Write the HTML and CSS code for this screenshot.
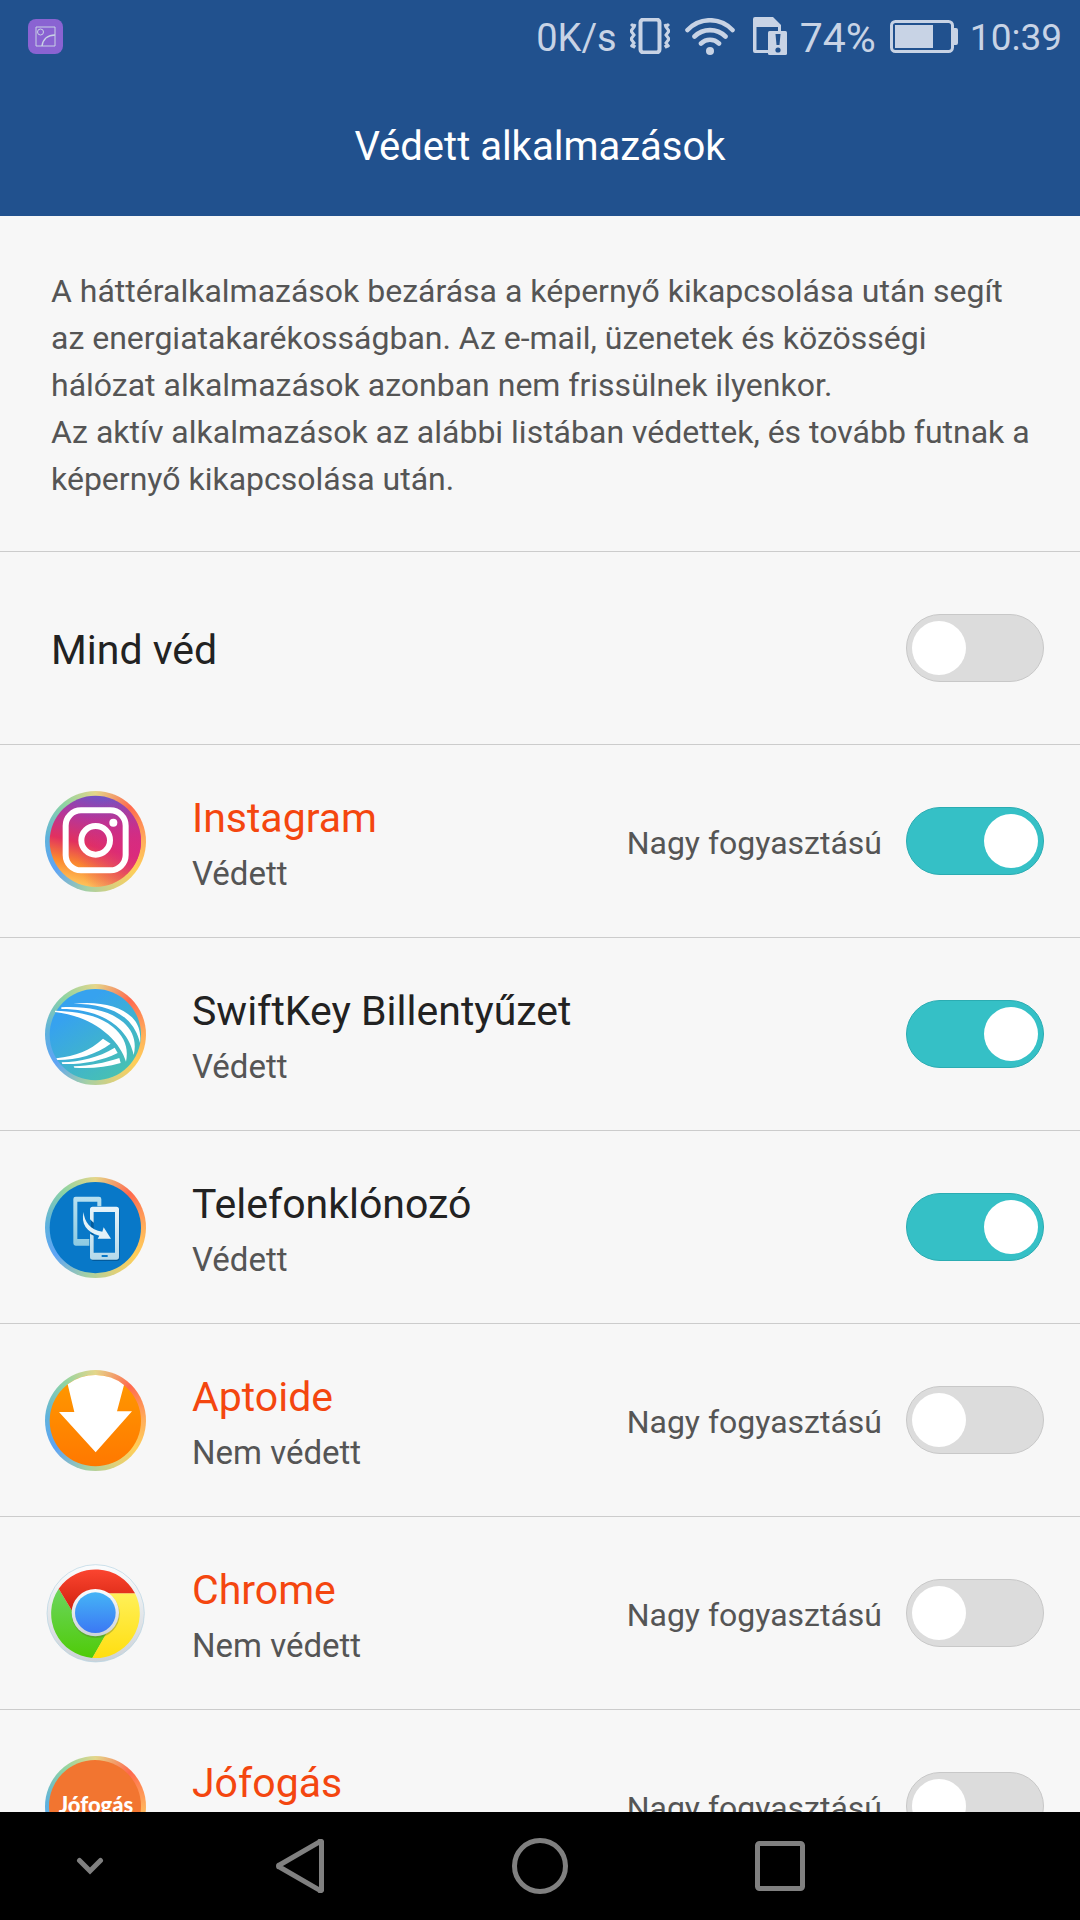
FILE: index.html
```html
<!DOCTYPE html>
<html lang="hu">
<head>
<meta charset="utf-8">
<meta name="viewport" content="width=device-width, initial-scale=1">
<title>Védett alkalmazások</title>
<link rel="stylesheet" href="styles.css">
</head>
<body>
<header class="header">
  <div class="status">
    <svg class="status-notice" width="35" height="35" viewBox="0 0 35 35" fill="none" stroke="#c8d3e5">
      <rect width="35" height="35" rx="8" fill="#8a63d2" stroke="none"/>
      <path d="M8 8h19v19H8z"/><circle cx="12.500" cy="13" r="3"/><path d="M14 27C15 20 20 16 27 16" stroke-width="1.500"/>
    </svg>
    <span class="status-speed">0K/s</span>
    <svg class="status-vibrate" width="40" height="36" viewBox="0 0 40 36" fill="none" stroke="#c8d3e5" stroke-width="3">
      <rect x="10.500" y="1.500" width="19" height="33" rx="3" stroke-width="4"/>
      <path d="M1 6l3 3-3 4 3 4-3 4 3 4-3 4M5 6l-1 3M5 27l-2 3"/>
      <path d="M39 6l-3 3 3 4-3 4 3 4-3 4 3 4M35 6l1 3M35 27l2 3"/>
    </svg>
    <svg class="status-wifi" width="50" height="37" viewBox="0 0 50 37" fill="none" stroke="#c8d3e5" stroke-width="4.600" stroke-linecap="round">
      <path d="M2.500 12C15-1 35-1 47.500 12M9.500 18.500C18 10 32 10 40.500 18.500M16 25.500C21 20.500 29 20.500 34 25.500"/>
      <circle cx="25" cy="33" r="4" fill="#c8d3e5" stroke="none"/>
    </svg>
    <svg class="status-sim" width="35" height="38" viewBox="0 0 35 38">
      <path d="M2 0h18l8 8v7h-3v-5H3.500v23H16v3H2a2 2 0 0 1-2-2V2a2 2 0 0 1 2-2z" fill="#c8d3e5"/>
      <rect x="15" y="14" width="19" height="24" rx="1.500" fill="#c8d3e5"/>
      <path d="M22.500 17h5l-1 11h-3z" fill="#21518e"/><circle cx="25" cy="33" r="2.600" fill="#21518e"/>
    </svg>
    <span class="status-charge">74%</span>
    <svg class="status-battery" width="68" height="33" viewBox="0 0 68 33" fill="none" stroke="#c8d3e5">
      <rect x="1.500" y="1.500" width="61" height="30" rx="4" stroke-width="3"/>
      <path d="M5 5h38v23H5zM64 8h2q2 0 2 2v13q0 2-2 2h-2z" fill="#c8d3e5" stroke="none"/>
    </svg>
    <time class="status-time">10:39</time>
  </div>
  <h1 class="title">Védett alkalmazások</h1>
</header>

<main class="content">
  <p class="intro">A háttéralkalmazások bezárása a képernyő kikapcsolása után segít<br>az energiatakarékosságban. Az e-mail, üzenetek és közösségi<br>hálózat alkalmazások azonban nem frissülnek ilyenkor.<br>Az aktív alkalmazások az alábbi listában védettek, és tovább futnak a<br>képernyő kikapcsolása után.</p>

  <div class="row">
    <div class="grow grow-single"><label class="name" for="all">Mind véd</label></div>
    <input class="switch" type="checkbox" id="all">
  </div>

  <div class="row">
    <span class="icon">
      <svg class="art" viewBox="46 31 303 303">
        <defs>
          <linearGradient id="ig" x1="0.350" y1="1" x2="0.600" y2="0"><stop offset="0" stop-color="#ffc85e"/><stop offset=".22" stop-color="#fb8a2e"/><stop offset=".45" stop-color="#e2305f"/><stop offset=".72" stop-color="#b5369a"/><stop offset="1" stop-color="#6a55c8"/></linearGradient>
          <radialGradient id="igp" cx="1" cy=".6" r=".7"><stop offset="0" stop-color="#d92a80"/><stop offset="1" stop-color="#d92a80" stop-opacity="0"/></radialGradient>
        </defs>
        <circle cx="197" cy="182" r="137" fill="url(#ig)"/><circle cx="197" cy="182" r="137" fill="url(#igp)"/>
        <g fill="none" stroke="#fff" stroke-width="18"><rect x="108" y="89" width="180" height="180" rx="46"/><circle cx="198" cy="179" r="43"/></g>
        <circle cx="251" cy="126" r="12" fill="#fff"/>
      </svg>
    </span>
    <div class="grow">
      <label class="name heavy" for="instagram">Instagram</label>
      <div class="state">Védett</div>
    </div>
    <span class="usage">Nagy fogyasztású</span>
    <input class="switch" type="checkbox" id="instagram" checked>
  </div>

  <div class="row">
    <span class="icon">
      <svg class="art" viewBox="46 39 303 303">
        <defs><linearGradient id="sk" x1=".2" y1=".1" x2=".8" y2=".95"><stop offset=".15" stop-color="#36a2ef"/><stop offset="1" stop-color="#48c2b0"/></linearGradient></defs>
        <circle cx="197" cy="191" r="137" fill="url(#sk)"/>
        <g fill="#fff">
          <path d="M131 98C205 90 270 103 307 139C330 162 334 190 331 216C325 190 312 163 289 143C250 109 193 99 131 98z"/>
          <path d="M95 109C175 105 240 119 281 154C312 181 321 217 312 252C307 230 297 203 274 178C227 128 158 114 95 114z"/>
          <path d="M76 119C145 121 205 132 249 167C286 197 297 232 289 272C281 247 264 218 237 193C190 150 134 130 76 123z"/>
          <path d="M80 262C139 254 179 240 220 203L243 218C200 250 145 267 83 267z"/>
          <path d="M96 274C155 272 205 260 255 230L264 246C214 271 155 281 98 279z"/>
          <path d="M132 286C180 284 224 276 269 261L273 276C228 290 180 293 134 290z"/>
        </g>
      </svg>
    </span>
    <div class="grow">
      <label class="name" for="swiftkey">SwiftKey Billentyűzet</label>
      <div class="state">Védett</div>
    </div>
    <input class="switch" type="checkbox" id="swiftkey" checked>
  </div>

  <div class="row">
    <span class="icon">
      <svg class="art" viewBox="46 49 303 303">
        <defs><linearGradient id="ph" x1="0" y1="0" x2="0" y2="1"><stop offset="0" stop-color="#b8e0f0"/><stop offset="1" stop-color="#8ecbe2"/></linearGradient><linearGradient id="pf" x1="0" y1="0" x2="0" y2="1"><stop offset="0" stop-color="#e8f4fa"/><stop offset="1" stop-color="#b4d9ea"/></linearGradient></defs>
        <circle cx="197" cy="201" r="137" fill="#0878c8"/>
        <g fill="#035b9c" transform="translate(3 4)"><path fill-rule="evenodd" d="M190 138h68q9 0 9 9v142q0 8-9 8h-68q-9 0-9-8V147q0-9 9-9zm2 16v122h64V154z"/></g>
        <path fill="#0878c8" d="M192 154h64v122h-64z"/>
        <path fill="url(#ph)" d="M138 108h70q7 0 7 7v22h-12v-14h-60v112h36v20h-41q-7 0-7-7V115q0-7 7-7z"/>
        <path fill="url(#pf)" fill-rule="evenodd" d="M189 138h71q8 0 8 8v143q0 8-8 8h-71q-8 0-8-8v-70l11 6v51h64V154h-64v32l-11-10v-30q0-8 8-8z"/>
        <rect x="216" y="283" width="18" height="6" fill="#0878c8"/>
        <path d="M162 154C164 184 181 207 218 213L222 200L244 234L204 234L209 225C171 216 153 188 162 154z" fill="#e4f2f8"/>
      </svg>
    </span>
    <div class="grow">
      <label class="name" for="clone">Telefonklónozó</label>
      <div class="state">Védett</div>
    </div>
    <input class="switch" type="checkbox" id="clone" checked>
  </div>

  <div class="row">
    <span class="icon">
      <svg class="art" viewBox="46 43 303 303">
        <defs><linearGradient id="ap" x1="0" y1="0" x2="0" y2="1"><stop offset="0" stop-color="#ff9a00"/><stop offset="1" stop-color="#ff7800"/></linearGradient></defs>
        <circle cx="197" cy="195" r="137" fill="url(#ap)"/>
        <path d="M114 86A137 137 0 0 1 283 88L262 167H307L198 290L88 169H134z" fill="#fff"/>
      </svg>
    </span>
    <div class="grow">
      <label class="name heavy" for="aptoide">Aptoide</label>
      <div class="state">Nem védett</div>
    </div>
    <span class="usage">Nagy fogyasztású</span>
    <input class="switch" type="checkbox" id="aptoide">
  </div>

  <div class="row">
    <span class="icon icon-plain">
      <svg class="art" viewBox="46 37 303 303">
        <defs>
          <linearGradient id="cb" x1="0" y1="0" x2="0" y2="1"><stop offset="0" stop-color="#fbfcfd"/><stop offset="1" stop-color="#ccd2d8"/></linearGradient>
          <linearGradient id="cr" x1="0" y1="0" x2="0" y2="1"><stop offset="0" stop-color="#fb4530"/><stop offset="1" stop-color="#cf1f0c"/></linearGradient>
          <linearGradient id="cg" x1="0" y1="0" x2="0" y2="1"><stop offset="0" stop-color="#6cd55e"/><stop offset="1" stop-color="#4fcb08"/></linearGradient>
          <linearGradient id="cy" x1="0" y1="0" x2="0" y2="1"><stop offset="0" stop-color="#fff058"/><stop offset="1" stop-color="#ffde10"/></linearGradient>
          <linearGradient id="cc" x1="0" y1="0" x2="0" y2="1"><stop offset="0" stop-color="#45b4f6"/><stop offset="1" stop-color="#3b78f4"/></linearGradient>
        </defs>
        <circle cx="198" cy="188" r="146" fill="url(#cb)" stroke="#b5d3e2" stroke-width="2"/>
        <path d="M87 114A134 134 0 0 0 188 322L230 250L198 188L127 180z" fill="url(#cg)"/>
        <path d="M316 128A134 134 0 0 1 188 322L230 248L198 188L240 128z" fill="url(#cy)"/>
        <path d="M87 114A134 134 0 0 1 316 128H198V188L127 180z" fill="url(#cr)"/>
        <circle cx="198" cy="190" r="72" fill="#5a6a38" opacity=".35"/>
        <circle cx="197" cy="186" r="71" fill="url(#cb)"/><circle cx="197" cy="186" r="61" fill="url(#cc)"/>
      </svg>
    </span>
    <div class="grow">
      <label class="name heavy" for="chrome">Chrome</label>
      <div class="state">Nem védett</div>
    </div>
    <span class="usage">Nagy fogyasztású</span>
    <input class="switch" type="checkbox" id="chrome">
  </div>

  <div class="row">
    <span class="icon">
      <svg class="art" viewBox="0 0 101 101">
        <circle cx="50" cy="50" r="46" fill="#f27530"/>
        <text class="logo-text" x="51" y="57" text-anchor="middle">Jófogás</text>
      </svg>
    </span>
    <div class="grow">
      <label class="name heavy" for="jofogas">Jófogás</label>
      <div class="state">Nem védett</div>
    </div>
    <span class="usage">Nagy fogyasztású</span>
    <input class="switch" type="checkbox" id="jofogas">
  </div>
</main>

<nav class="navbar">
  <button class="nav-button" aria-label="Elrejtés"><svg width="28" height="18" viewBox="0 0 28 18" fill="none" stroke="#808080" stroke-width="5" stroke-linecap="round"><path d="M3.500 3.500L14 14L24.500 3.500"/></svg></button>
  <button class="nav-button" aria-label="Vissza"><svg width="48" height="54" viewBox="0 0 48 54" fill="none" stroke="#808080" stroke-width="5" stroke-linejoin="round"><path d="M45.500 3.500v47a1 1 0 0 1-2 .6L3.500 28a1 1 0 0 1 0-2L43.500 2.900a1 1 0 0 1 2 .6z"/></svg></button>
  <button class="nav-button" aria-label="Kezdőlap"><svg width="56" height="56" viewBox="0 0 56 56" fill="none" stroke="#808080" stroke-width="5"><circle cx="28" cy="28" r="25.500"/></svg></button>
  <button class="nav-button" aria-label="Legutóbbi"><svg width="50" height="50" viewBox="0 0 50 50" fill="none" stroke="#808080" stroke-width="5"><rect x="2.500" y="2.500" width="45" height="45" rx="2"/></svg></button>
</nav>
</body>
</html>
```
FILE: styles.css
```css
* {
  box-sizing: border-box;
}

body {
  margin: 0;
  height: 100vh;
  display: flex;
  flex-direction: column;
  background: #f7f7f7;
  color: #222;
  font-family: Roboto, "Liberation Sans", sans-serif;
}

.header {
  flex: none;
  background: #21518e;
  color: #fff;
}

.status {
  display: flex;
  align-items: center;
  height: 72px;
  padding: 0 18px 0 28px;
  color: #c8d3e5;
  font-size: 38px;
}

.status-speed,
.status-charge,
.status-time {
  padding-top: 4px;
  line-height: 72px;
}

.status-notice {
  margin-right: auto;
}

.status-vibrate {
  margin-left: 13px;
}

.status-wifi {
  margin-left: 15px;
}

.status-sim {
  margin-left: 18px;
}

.status-charge {
  margin-left: 12px;
  font-size: 41px;
}

.status-battery {
  margin-left: 14px;
}

.status-time {
  margin-left: 12px;
  font-size: 37px;
}

.title {
  margin: 0;
  height: 144px;
  font-size: 40px;
  font-weight: 400;
  line-height: 150px;
  text-align: center;
}

.content {
  flex: 1;
  min-height: 0;
  overflow-y: auto;
  scrollbar-width: none;
}

.intro {
  margin: 0;
  padding: 52px 36px 48px 51px;
  color: #555;
  font-size: 32px;
  line-height: 47px;
}

.row {
  display: flex;
  align-items: center;
  height: 193px;
  padding: 0 36px 0 51px;
  border-top: 1px solid #ccc;
}

.icon {
  flex: none;
  width: 101px;
  height: 101px;
  margin: 0 46px 0 -6px;
  border-radius: 50%;
  background: conic-gradient(#e4d68a, #ff6a4e 45deg, #ffaf5c 90deg, #ffce58 125deg, #e0d078 155deg, #a5d0a4 190deg, #5ea4f5 235deg, #5fb2dc 275deg, #8fd4a2 320deg, #e4d68a);
}

.icon-plain {
  background: none;
}

.art {
  display: block;
  width: 100%;
  height: 100%;
}

.logo-text {
  fill: #fff;
  font-family: Lato, sans-serif;
  font-size: 22px;
  font-weight: 900;
}

.grow {
  flex: 1;
  padding-top: 7px;
}

.grow-single {
  padding-top: 4px;
}

.name {
  display: block;
  font-size: 41px;
  line-height: 56px;
}

.heavy {
  color: #f4460f;
}

.state,
.usage {
  color: #555;
  font-size: 33px;
  line-height: 52px;
}

.state {
  margin-top: 2px;
}

.usage {
  margin-right: 24px;
  padding-top: 4px;
  font-size: 32px;
}

.switch {
  appearance: none;
  flex: none;
  display: flex;
  align-items: center;
  width: 138px;
  height: 68px;
  margin: 0;
  padding: 0 5px;
  border: 1px solid #c8c8c8;
  border-radius: 34px;
  background: #dcdcdc;
}

.switch::before {
  content: "";
  width: 54px;
  height: 54px;
  border-radius: 50%;
  background: #fff;
}

.switch:checked {
  justify-content: flex-end;
  border-color: #2bacb2;
  background: #35c0c6;
}

.navbar {
  flex: none;
  display: grid;
  grid-template-columns: 3fr 4fr 4fr 4fr 3fr;
  height: 108px;
  background: #000;
}

.nav-button {
  display: flex;
  align-items: center;
  justify-content: center;
  padding: 0;
  border: 0;
  background: none;
}
```
